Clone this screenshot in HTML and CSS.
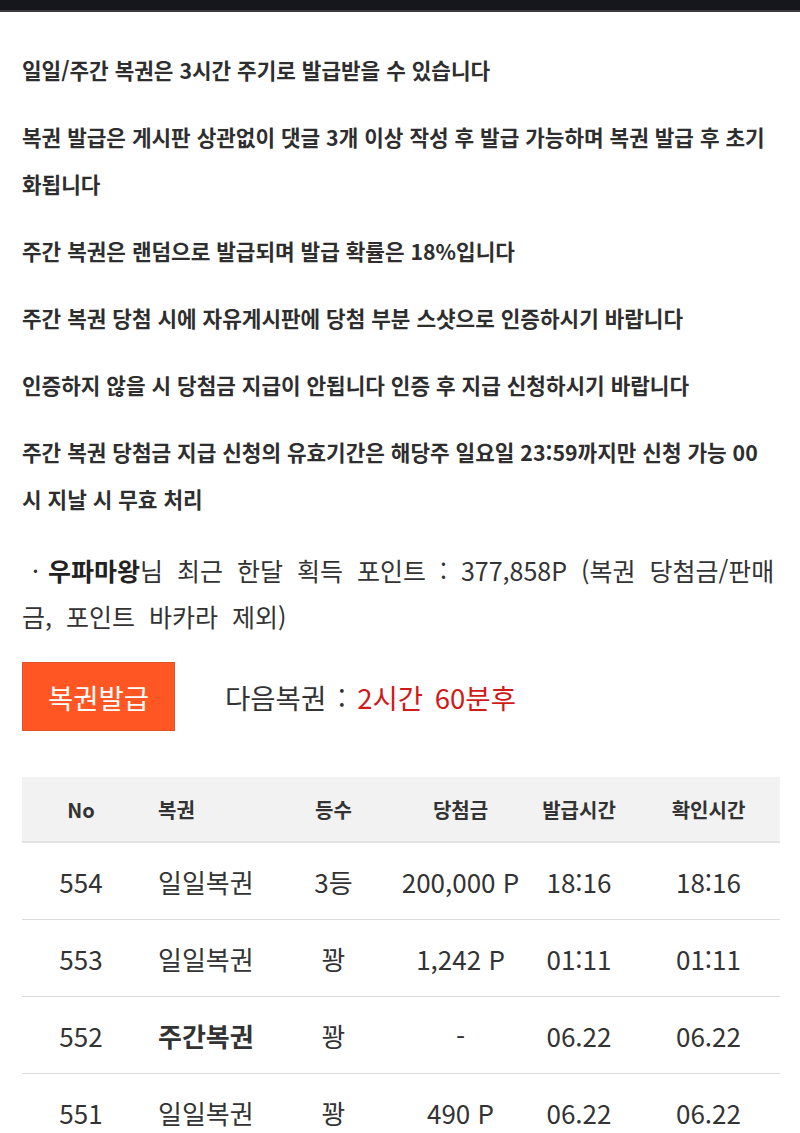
FILE: index.html
```html
<!DOCTYPE html>
<html lang="ko">
<head>
<meta charset="utf-8">
<title>복권</title>
<link rel="stylesheet" href="styles.css">
</head>
<body>
<div class="topbar"></div>
<main class="content">
  <section class="notice">
    <p>일일/주간 복권은 3시간 주기로 발급받을 수 있습니다</p>
    <p>복권 발급은 게시판 상관없이 댓글 3개 이상 작성 후 발급 가능하며 복권 발급 후 초기화됩니다</p>
    <p>주간 복권은 랜덤으로 발급되며 발급 확률은 18%입니다</p>
    <p>주간 복권 당첨 시에 자유게시판에 당첨 부분 스샷으로 인증하시기 바랍니다</p>
    <p>인증하지 않을 시 당첨금 지급이 안됩니다 인증 후 지급 신청하시기 바랍니다</p>
    <p>주간 복권 당첨금 지급 신청의 유효기간은 해당주 일요일 23:59까지만 신청 가능 00시 지날 시 무효 처리</p>
  </section>
  <p class="points"><span class="dot">·</span><b>우파마왕</b><span>님 최근 한달 획득 포인트 : 377,858P (복권 당첨금/판매금, 포인트 바카라 제외)</span></p>
  <div class="issue">
    <button class="btn-issue" type="button">복권발급</button>
    <span class="next">다음복권 : <em>2시간 60분후</em></span>
  </div>
  <table class="tickets">
    <colgroup>
      <col class="c-no"><col class="c-name"><col class="c-rank"><col class="c-prize"><col class="c-issued"><col class="c-checked">
    </colgroup>
    <thead>
      <tr><th>No</th><th class="left">복권</th><th>등수</th><th>당첨금</th><th>발급시간</th><th class="last">확인시간</th></tr>
    </thead>
    <tbody>
      <tr><td>554</td><td class="left">일일복권</td><td>3등</td><td>200,000 P</td><td>18:16</td><td class="last">18:16</td></tr>
      <tr><td>553</td><td class="left">일일복권</td><td>꽝</td><td>1,242 P</td><td>01:11</td><td class="last">01:11</td></tr>
      <tr><td>552</td><td class="left"><b>주간복권</b></td><td>꽝</td><td>-</td><td>06.22</td><td class="last">06.22</td></tr>
      <tr><td>551</td><td class="left">일일복권</td><td>꽝</td><td>490 P</td><td>06.22</td><td class="last">06.22</td></tr>
    </tbody>
  </table>
</main>
</body>
</html>
```
FILE: styles.css
```css
html, body {
  margin: 0;
  padding: 0;
  background: #fff;
}
body {
  font-family: "Noto Sans CJK KR", "Noto Sans", sans-serif;
  color: #333;
  overflow: hidden;
}
.topbar {
  height: 10px;
  background: #15171c;
  border-bottom: 2px solid #3c3c40;
}
.content {
  padding: 34px 28px 0 22px;
}
.notice p {
  margin: 0 0 20px;
  font-size: 21.3px;
  font-weight: 700;
  line-height: 47px;
  color: #2e2e2e;
}
.points {
  margin: 25px -12px 0 0;
  font-size: 25px;
  line-height: 46px;
  color: #333;
  word-spacing: 7px;
}
.points .dot {
  display: inline-block;
  margin: 0 9px 0 10px;
}
.points b {
  font-weight: 700;
  color: #222;
}
.issue {
  display: flex;
  align-items: center;
  gap: 50px;
  margin-top: 23px;
}
.btn-issue {
  width: 153px;
  height: 69px;
  background: #ff5623;
  border: 1px solid #e4522a;
  color: #fff;
  font-family: inherit;
  font-size: 27.5px;
  padding: 0;
}
.next {
  font-size: 27.5px;
  color: #333;
  word-spacing: 4px;
}
.next em {
  font-style: normal;
  color: #d01919;
}
.tickets {
  margin-top: 46px;
  width: 758px;
  border-collapse: collapse;
  table-layout: fixed;
}
.c-no { width: 118px; }
.c-name { width: 141px; }
.c-rank { width: 105px; }
.c-prize { width: 149px; }
.c-issued { width: 88px; }
.c-checked { width: 157px; }
.tickets th {
  background: #f2f2f2;
  height: 64px;
  font-size: 20px;
  font-weight: 700;
  color: #333;
  border-bottom: 2px solid #e2e2e2;
  padding: 0;
  text-align: center;
}
.tickets td {
  height: 76px;
  font-size: 26px;
  color: #333;
  text-align: center;
  border-bottom: 1px solid #dcdcdc;
  padding: 0;
  white-space: nowrap;
  overflow: visible;
}
.tickets .left {
  text-align: left;
  padding-left: 18px;
}
.tickets .last {
  padding-left: 14px;
}
.tickets td b {
  font-weight: 700;
}
```
